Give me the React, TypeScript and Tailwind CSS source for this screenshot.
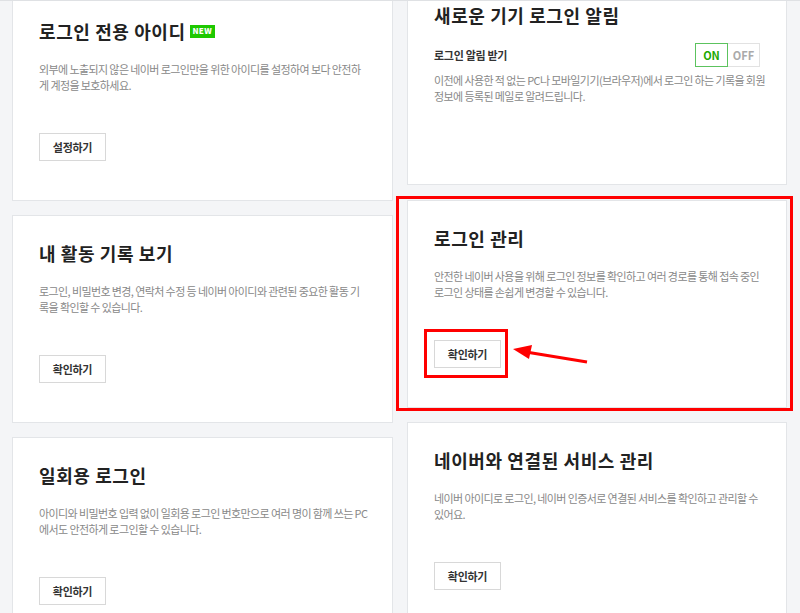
import React from 'react'

type CardProps = {
  title: React.ReactNode
  desc: string[]
  action?: string
  children?: React.ReactNode
}

function Card({ title, desc, action, children }: CardProps) {
  return (
    <div className="bg-white border border-[#e3e5e8] h-[208px] px-[26px] pt-[25px]">
      <h3 className="h-[24px] leading-[24px] text-[18px] font-bold text-[#222] tracking-[0.6px] flex items-center">{title}</h3>
      {children}
      {desc.length > 0 && (
        <p className="mt-[18px] text-[11px] leading-[16px] text-[#888] tracking-[-0.6px]">
          {desc.map((line, i) => (
            <span key={i} className="block whitespace-nowrap">
              {line}
            </span>
          ))}
        </p>
      )}
      {action && (
        <button className="mt-[40px] h-[28px] w-[67px] border border-[#d8d8d8] bg-white text-[11px] font-bold text-[#333] tracking-[-0.3px]">
          {action}
        </button>
      )}
    </div>
  )
}

export default function App() {
  return (
    <div className="relative h-[613px] w-[800px] overflow-hidden bg-[#f4f5f7] font-['Noto_Sans_CJK_KR',sans-serif]">
      <div className="flex gap-[14px] pl-[12px]">
        {/* left column */}
        <div className="w-[381px] -mt-[7px] flex flex-col gap-[14px]">
          <Card
            title={
              <>
                로그인 전용 아이디
                <span className="ml-[4px] inline-flex h-[13px] w-[25px] items-center justify-center bg-[#1ec800] text-[8px] font-black leading-none text-white tracking-[0.3px]">
                  NEW
                </span>
              </>
            }
            desc={['외부에 노출되지 않은 네이버 로그인만을 위한 아이디를 설정하여 보다 안전하', '게 계정을 보호하세요.']}
            action="설정하기"
          />
          <Card
            title="내 활동 기록 보기"
            desc={['로그인, 비밀번호 변경, 연락처 수정 등 네이버 아이디와 관련된 중요한 활동 기', '록을 확인할 수 있습니다.']}
            action="확인하기"
          />
          <Card
            title="일회용 로그인"
            desc={['아이디와 비밀번호 입력 없이 일회용 로그인 번호만으로 여러 명이 함께 쓰는 PC', '에서도 안전하게 로그인할 수 있습니다.']}
            action="확인하기"
          />
        </div>

        {/* right column */}
        <div className="w-[380px] -mt-[23px] flex flex-col gap-[14px]">
          <div className="bg-white border border-[#e3e5e8] h-[208px] px-[26px] pt-[25px]">
            <h3 className="h-[24px] leading-[24px] text-[18px] font-bold text-[#222] tracking-[0.6px]">새로운 기기 로그인 알림</h3>
            <div className="mt-[16px] flex items-center justify-between">
              <span className="text-[11px] font-bold text-[#333] tracking-[-0.3px]">로그인 알림 받기</span>
              <div className="flex h-[24px]">
                <span className="flex w-[33px] items-center justify-center border border-[#5cc35e] text-[11px] font-bold text-[#1ea800]">
                  ON
                </span>
                <span className="flex w-[32px] items-center justify-center border border-l-0 border-[#e2e2e2] text-[11px] font-bold text-[#aaa]">
                  OFF
                </span>
              </div>
            </div>
            <p className="mt-[5px] text-[11px] leading-[16px] text-[#888] tracking-[-0.6px]">
              <span className="block whitespace-nowrap">이전에 사용한 적 없는 PC나 모바일기기(브라우저)에서 로그인 하는 기록을 회원</span>
              <span className="block whitespace-nowrap">정보에 등록된 메일로 알려드립니다.</span>
            </p>
          </div>
          <div className="mt-px">
            <Card
              title="로그인 관리"
              desc={['안전한 네이버 사용을 위해 로그인 정보를 확인하고 여러 경로를 통해 접속 중인', '로그인 상태를 손쉽게 변경할 수 있습니다.']}
              action="확인하기"
            />
          </div>
          <Card
            title="네이버와 연결된 서비스 관리"
            desc={['네이버 아이디로 로그인, 네이버 인증서로 연결된 서비스를 확인하고 관리할 수', '있어요.']}
            action="확인하기"
          />
        </div>
      </div>

      {/* top edge */}
      <div className="absolute left-0 top-0 h-px w-full bg-[#dfe1e4]" />

      {/* annotations */}
      <div className="absolute left-[396px] top-[196px] h-[215px] w-[397px] border-[3px] border-[#ff0000]" />
      <div className="absolute left-[424px] top-[329px] h-[49px] w-[84px] border-[3px] border-[#ff0000]" />
      <svg className="absolute left-0 top-0" width="800" height="613" viewBox="0 0 800 613">
        <line x1="587" y1="362" x2="526" y2="352" stroke="#ff0000" strokeWidth="3" />
        <polygon points="513,349 532,345 529,359" fill="#ff0000" />
      </svg>
    </div>
  )
}
